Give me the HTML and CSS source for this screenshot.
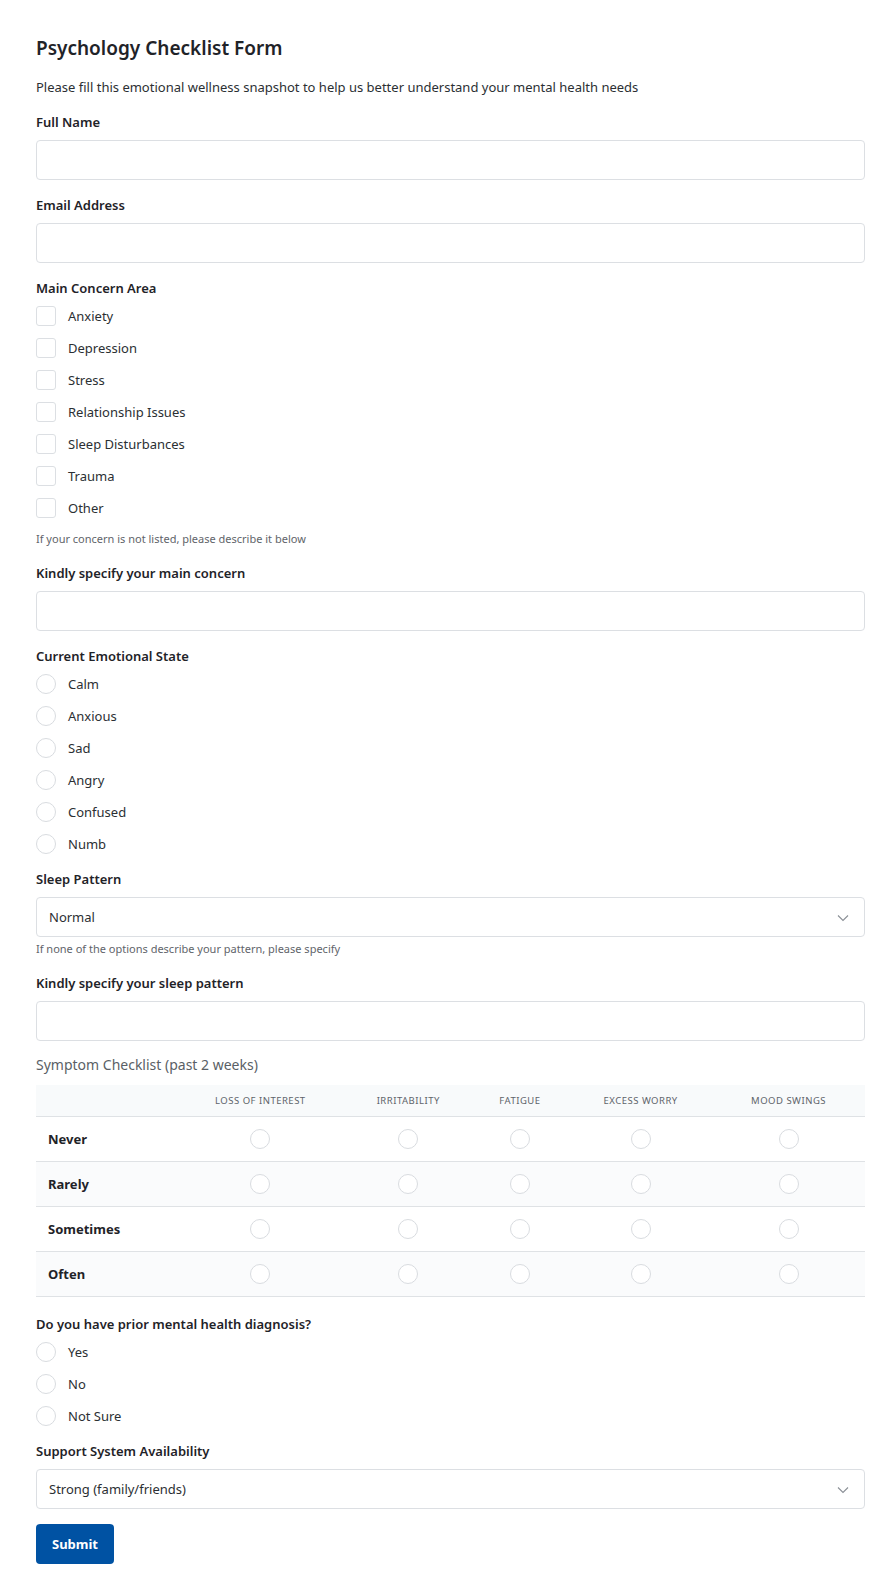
FILE: index.html
```html
<!DOCTYPE html>
<html lang="en">
<head>
<meta charset="utf-8">
<title>Psychology Checklist Form</title>
<link rel="stylesheet" href="styles.css">
</head>
<body>
<form class="form">
  <h1 class="title">Psychology Checklist Form</h1>
  <p class="intro">Please fill this emotional wellness snapshot to help us better understand your mental health needs</p>

  <div class="field">
    <label class="label">Full Name</label>
    <input class="input" type="text">
  </div>

  <div class="field">
    <label class="label">Email Address</label>
    <input class="input" type="email">
  </div>

  <div class="field">
    <div class="label">Main Concern Area</div>
    <div class="options">
      <label class="option"><span class="box"></span>Anxiety</label>
      <label class="option"><span class="box"></span>Depression</label>
      <label class="option"><span class="box"></span>Stress</label>
      <label class="option"><span class="box"></span>Relationship Issues</label>
      <label class="option"><span class="box"></span>Sleep Disturbances</label>
      <label class="option"><span class="box"></span>Trauma</label>
      <label class="option"><span class="box"></span>Other</label>
    </div>
    <div class="help help-list">If your concern is not listed, please describe it below</div>
  </div>

  <div class="field">
    <label class="label">Kindly specify your main concern</label>
    <input class="input" type="text">
  </div>

  <div class="field">
    <div class="label">Current Emotional State</div>
    <div class="options">
      <label class="option"><span class="circle"></span>Calm</label>
      <label class="option"><span class="circle"></span>Anxious</label>
      <label class="option"><span class="circle"></span>Sad</label>
      <label class="option"><span class="circle"></span>Angry</label>
      <label class="option"><span class="circle"></span>Confused</label>
      <label class="option"><span class="circle"></span>Numb</label>
    </div>
  </div>

  <div class="field">
    <label class="label">Sleep Pattern</label>
    <div class="select">
      <span>Normal</span>
      <svg class="chev" width="12" height="8" viewBox="0 0 12 8"><path d="M1 1.5 L6 6.5 L11 1.5" fill="none" stroke="#8a8f96" stroke-width="1.1"/></svg>
    </div>
    <div class="help help-select">If none of the options describe your pattern, please specify</div>
  </div>

  <div class="field">
    <label class="label">Kindly specify your sleep pattern</label>
    <input class="input" type="text">
  </div>

  <div class="field field-table">
    <div class="table-title">Symptom Checklist (past 2 weeks)</div>
    <table class="matrix">
      <colgroup>
        <col class="c1"><col class="c2"><col class="c3"><col class="c4"><col class="c5"><col class="c6">
      </colgroup>
      <thead>
        <tr><th></th><th>Loss of Interest</th><th>Irritability</th><th>Fatigue</th><th>Excess Worry</th><th>Mood Swings</th></tr>
      </thead>
      <tbody>
        <tr><td class="rowlabel">Never</td><td><span class="circle"></span></td><td><span class="circle"></span></td><td><span class="circle"></span></td><td><span class="circle"></span></td><td><span class="circle"></span></td></tr>
        <tr class="alt"><td class="rowlabel">Rarely</td><td><span class="circle"></span></td><td><span class="circle"></span></td><td><span class="circle"></span></td><td><span class="circle"></span></td><td><span class="circle"></span></td></tr>
        <tr><td class="rowlabel">Sometimes</td><td><span class="circle"></span></td><td><span class="circle"></span></td><td><span class="circle"></span></td><td><span class="circle"></span></td><td><span class="circle"></span></td></tr>
        <tr class="alt"><td class="rowlabel">Often</td><td><span class="circle"></span></td><td><span class="circle"></span></td><td><span class="circle"></span></td><td><span class="circle"></span></td><td><span class="circle"></span></td></tr>
      </tbody>
    </table>
  </div>

  <div class="field">
    <div class="label">Do you have prior mental health diagnosis?</div>
    <div class="options">
      <label class="option"><span class="circle"></span>Yes</label>
      <label class="option"><span class="circle"></span>No</label>
      <label class="option"><span class="circle"></span>Not Sure</label>
    </div>
  </div>

  <div class="field field-last">
    <label class="label">Support System Availability</label>
    <div class="select">
      <span>Strong (family/friends)</span>
      <svg class="chev" width="12" height="8" viewBox="0 0 12 8"><path d="M1 1.5 L6 6.5 L11 1.5" fill="none" stroke="#8a8f96" stroke-width="1.1"/></svg>
    </div>
  </div>

  <button class="submit" type="button">Submit</button>
</form>
</body>
</html>
```

FILE: styles.css
```css
* { box-sizing: border-box; }

html, body {
  margin: 0;
  padding: 0;
  background: #ffffff;
}

body {
  font-family: "Noto Sans", "Open Sans", "Liberation Sans", sans-serif;
  color: #1f2328;
  font-size: 13px;
}

.form {
  display: flex;
  flex-direction: column;
  padding: 34px 4px 6px 36px;
}

.title {
  margin: 0;
  font-size: 19px;
  line-height: 28px;
  font-weight: 600;
  color: #1f2328;
}

.intro {
  margin: 16px 0 17px;
  font-size: 13px;
  line-height: 18px;
  color: #2b2f33;
}

.field {
  display: flex;
  flex-direction: column;
  margin-bottom: 16px;
}

.field-last { margin-bottom: 15px; }

.label {
  display: block;
  font-size: 13px;
  line-height: 18px;
  font-weight: 600;
  margin-bottom: 9px;
  color: #1f2328;
}

.input {
  display: block;
  width: 100%;
  height: 40px;
  border: 1px solid #dcdfe3;
  border-radius: 4px;
  background: #fff;
  font: inherit;
  padding: 0 12px;
  outline: none;
}

.options {
  display: flex;
  flex-direction: column;
  gap: 12px;
}

.option {
  display: flex;
  align-items: center;
  gap: 12px;
  height: 20px;
  font-size: 13px;
  color: #2b2f33;
}

.box {
  display: inline-block;
  width: 20px;
  height: 20px;
  border: 1px solid #dcdfe3;
  border-radius: 3px;
  background: #fff;
  flex: none;
}

.circle {
  display: inline-block;
  width: 20px;
  height: 20px;
  border: 1px solid #d9dce0;
  border-radius: 50%;
  background: #fff;
  flex: none;
  vertical-align: middle;
}

.help {
  font-size: 11px;
  line-height: 16px;
  color: #5f646a;
}

.help-list { margin-top: 13px; margin-bottom: 1px; }
.help-select { margin-top: 4px; margin-bottom: 1px; }

.select {
  position: relative;
  display: flex;
  align-items: center;
  height: 40px;
  border: 1px solid #dcdfe3;
  border-radius: 4px;
  padding: 0 12px;
  font-size: 13px;
  color: #2b2f33;
  background: #fff;
}

.chev {
  position: absolute;
  right: 15px;
  top: 16px;
}

.field-table { margin-top: -2px; margin-bottom: 18px; }

.table-title {
  font-size: 14px;
  line-height: 20px;
  color: #5a5f66;
  margin-bottom: 10px;
}

.matrix {
  width: 100%;
  border-collapse: collapse;
  table-layout: fixed;
}

.c1 { width: 138px; }
.c2 { width: 170px; }
.c3 { width: 124px; }
.c4 { width: 98px; }
.c5 { width: 142px; }
.c6 { width: 152px; }

.matrix thead tr {
  background: #f8fafb;
  height: 31px;
}

.matrix th {
  font-size: 9.5px;
  font-weight: 400;
  text-transform: uppercase;
  letter-spacing: 0.5px;
  color: #5f646a;
  text-align: center;
  padding: 0;
  border-bottom: 1px solid #dfe2e5;
}

.matrix tbody tr {
  height: 45px;
}

.matrix tbody tr.alt { background: #fafbfc; }

.matrix td {
  text-align: center;
  padding: 0;
  border-bottom: 1px solid #dfe2e5;
  line-height: 0;
}

.matrix td.rowlabel {
  text-align: left;
  padding-left: 12px;
  font-size: 13px;
  line-height: 18px;
  font-weight: 700;
  color: #1f2328;
}

.submit {
  align-self: flex-start;
  width: 78px;
  height: 40px;
  border: none;
  border-radius: 4px;
  background: #0052a3;
  color: #ffffff;
  font-family: inherit;
  font-size: 13px;
  font-weight: 700;
  padding: 0;
}
```
